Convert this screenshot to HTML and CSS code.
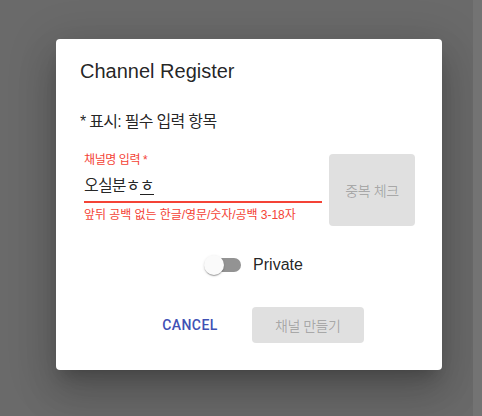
FILE: index.html
```html
<!DOCTYPE html>
<html lang="ko">
<head>
<meta charset="utf-8">
<title>Channel Register</title>
<link rel="stylesheet" href="styles.css">
</head>
<body>
<div class="screen">
  <div class="stage">
    <div class="dialog">
      <h2 class="title">Channel Register</h2>
      <div class="content">
        <p class="note">* 표시: 필수 입력 항목</p>
        <div class="field-row">
          <div class="field">
            <label class="label">채널명 입력 *</label>
            <div class="input">오실분ㅎ<span class="compose">ㅎ</span></div>
            <p class="helper">앞뒤 공백 없는 한글/영문/숫자/공백 3-18자</p>
          </div>
          <button class="check" disabled>중복 체크</button>
        </div>
        <div class="toggle-row">
          <span class="switch"><span class="track"></span><span class="thumb"></span></span>
          <span class="toggle-label">Private</span>
        </div>
      </div>
      <div class="actions">
        <button class="cancel">CANCEL</button>
        <button class="create" disabled>채널 만들기</button>
      </div>
    </div>
  </div>
  <div class="scrollbar"></div>
</div>
</body>
</html>
```

FILE: styles.css
```css
html, body {
  margin: 0;
  height: 100%;
}
body {
  font-family: "Liberation Sans", "Noto Sans CJK KR", sans-serif;
  background: #6a6a6a;
  color: rgba(0, 0, 0, 0.87);
}
.screen {
  display: flex;
  height: 416px;
}
.stage {
  flex: 1;
  padding: 39px 0 0 56px;
}
.scrollbar {
  width: 9px;
  background: #737373;
}
.dialog {
  width: 386px;
  background: #fff;
  border-radius: 4px;
  box-shadow: 0 11px 15px -7px rgba(0,0,0,0.2), 0 24px 38px 3px rgba(0,0,0,0.14), 0 9px 46px 8px rgba(0,0,0,0.12);
  display: flex;
  flex-direction: column;
}
.title {
  margin: 0;
  padding: 16px 24px;
  font-size: 20px;
  line-height: 32px;
  font-weight: 400;
}
.content {
  padding: 0 24px;
}
.note {
  margin: 7px 0 0;
  font-size: 16px;
  line-height: 24px;
  letter-spacing: -0.7px;
}
.field-row {
  display: flex;
  align-items: flex-start;
  gap: 7px;
  margin-top: 20px;
}
.field {
  width: 238px;
  margin-left: 4px;
}
.label {
  display: block;
  height: 16px;
  font-size: 12px;
  line-height: 12px;
  color: #f44336;
  letter-spacing: -0.4px;
}
.input {
  padding: 6px 0;
  height: 19px;
  font-size: 16px;
  line-height: 19px;
  letter-spacing: -0.8px;
  border-bottom: 2px solid #f44336;
}
.compose {
  border-bottom: 1px solid rgba(0,0,0,0.87);
}
.helper {
  margin: 3px 0 0;
  font-size: 12px;
  line-height: 18px;
  letter-spacing: -0.05px;
  color: #f44336;
}
.check {
  width: 86px;
  height: 72px;
  border: none;
  border-radius: 4px;
  background: #e0e0e0;
  color: rgba(0,0,0,0.26);
  font-family: inherit;
  font-size: 14px;
  letter-spacing: -0.4px;
  padding: 0;
}
.toggle-row {
  display: flex;
  justify-content: center;
  align-items: center;
  margin-top: 20px;
  height: 38px;
}
.switch {
  position: relative;
  width: 58px;
  height: 38px;
  padding: 12px;
  box-sizing: border-box;
}
.track {
  display: block;
  width: 34px;
  height: 14px;
  border-radius: 7px;
  background: #939393;
}
.thumb {
  position: absolute;
  left: 9px;
  top: 9px;
  width: 20px;
  height: 20px;
  border-radius: 50%;
  background: #fafafa;
  box-shadow: 0 2px 1px -1px rgba(0,0,0,0.2), 0 1px 1px 0 rgba(0,0,0,0.14), 0 1px 3px 0 rgba(0,0,0,0.12);
}
.toggle-label {
  font-size: 16px;
}
.actions {
  display: flex;
  justify-content: center;
  align-items: center;
  gap: 18px;
  margin-top: 23px;
  padding: 0 24px 27px 36px;
}
.cancel {
  height: 36px;
  padding: 0 16px;
  border: none;
  background: transparent;
  color: #3f51b5;
  font-family: Roboto, "Liberation Sans", sans-serif;
  font-weight: 500;
  font-size: 14px;
  letter-spacing: 0.4px;
}
.create {
  width: 112px;
  height: 36px;
  border: none;
  border-radius: 4px;
  background: #e0e0e0;
  color: rgba(0,0,0,0.26);
  font-family: inherit;
  font-size: 14px;
  letter-spacing: -0.5px;
  padding: 0;
}
```
